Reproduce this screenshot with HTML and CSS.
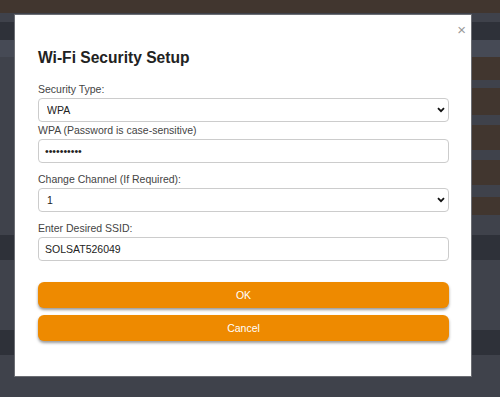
FILE: index.html
```html
<!DOCTYPE html>
<html lang="en">
<head>
    <meta charset="UTF-8">
    <meta name="viewport" content="width=device-width, initial-scale=1.0">
    <title>Wi-Fi Security Setup</title>
    <link rel="stylesheet" href="styles.css">
</head>
<body>

    <div class="backdrop">
        <div class="row top" style="height:13px"></div>
        <div class="row" style="height:9px"></div>
        <div class="row dark" style="height:18px"></div>
        <div class="row light" style="height:17px"></div>
        <div class="row brown" style="height:23px"></div>
        <div class="row" style="height:8px"></div>
        <div class="row brown" style="height:27px"></div>
        <div class="row" style="height:10px"></div>
        <div class="row brown" style="height:25px"></div>
        <div class="row" style="height:10px"></div>
        <div class="row brown" style="height:25px"></div>
        <div class="row" style="height:12px"></div>
        <div class="row brown" style="height:18px"></div>
        <div class="row" style="height:20px"></div>
        <div class="row dark" style="height:25px"></div>
        <div class="row" style="height:70px"></div>
        <div class="row dark" style="height:25px"></div>
        <div class="row" style="height:42px"></div>
    </div>

    <div class="modal">
        <span class="close">&times;</span>
        <h2>Wi-Fi Security Setup</h2>
        <form id="wifiForm">
            <label for="security" class="first">Security Type:</label>
            <select id="security">
                <option value="WPA" selected>WPA</option>
                <option value="WEP">WEP</option>
                <option value="None">None</option>
            </select>

            <label for="password" class="tight">WPA (Password is case-sensitive)</label>
            <input type="password" id="password" value="1234567890">

            <label for="channel">Change Channel (If Required):</label>
            <select id="channel">
                <option value="1" selected>1</option>
                <option value="6">6</option>
                <option value="11">11</option>
            </select>

            <label for="ssid">Enter Desired SSID:</label>
            <input type="text" id="ssid" value="SOLSAT526049">

            <button type="button" class="ok">OK</button>
            <button type="button" class="cancel">Cancel</button>
        </form>
    </div>

</body>
</html>
```

FILE: styles.css
```css
body {
    margin: 0;
    font-family: "Liberation Sans", Arial, sans-serif;
    background: #3f424b;
    overflow: hidden;
}

.backdrop {
    height: 397px;
}
.row {
    background: #3f424b;
}
.row.top {
    background: #41362f;
}
.row.brown {
    background: linear-gradient(to right, #3f424b 0, #3f424b 20px, #41362f 20px);
}
.row.dark {
    background: #2e3139;
}
.row.light {
    background: #464a55;
}

.modal {
    position: absolute;
    top: 14px;
    left: 14px;
    width: 411px;
    height: 329px;
    padding: 32px 22px 0 23px;
    background: white;
    border: 1px solid #6b6d73;
    color: #333;
}

.close {
    position: absolute;
    top: 6px;
    right: 5px;
    font-size: 15px;
    color: #999;
}

h2 {
    margin: 0;
    font-size: 15.6px;
    line-height: 22px;
    color: #222;
}

label {
    display: block;
    font-size: 10.5px;
    line-height: 16px;
    margin-top: 8px;
    margin-bottom: 1px;
    color: #444;
}
label.first {
    margin-top: 12px;
}
label.tight {
    margin-top: 0;
}

input, select {
    display: block;
    box-sizing: border-box;
    width: 100%;
    height: 24px;
    padding: 0 6px;
    border: 1px solid #ccc;
    border-radius: 4px;
    font-family: "Liberation Sans", Arial, sans-serif;
    font-size: 10.5px;
    color: #222;
    background-color: white;
}
select {
    -webkit-appearance: none;
    appearance: none;
    padding: 0 8px;
    background-image: url("data:image/svg+xml;utf8,<svg xmlns='http://www.w3.org/2000/svg' width='8' height='6' viewBox='0 0 8 6'><path d='M1 1.2 L4 4.2 L7 1.2' fill='none' stroke='%23111' stroke-width='1.8'/></svg>");
    background-repeat: no-repeat;
    background-position: right 3px center;
}

button {
    display: block;
    width: 100%;
    height: 26px;
    border: none;
    border-radius: 6px;
    background-color: #ee8a00;
    color: white;
    font-family: "Liberation Sans", Arial, sans-serif;
    font-size: 10.5px;
    box-shadow: 0 2px 3px rgba(0, 0, 0, 0.4);
    cursor: pointer;
}
.ok {
    margin-top: 21px;
}
.cancel {
    margin-top: 7px;
}
```
